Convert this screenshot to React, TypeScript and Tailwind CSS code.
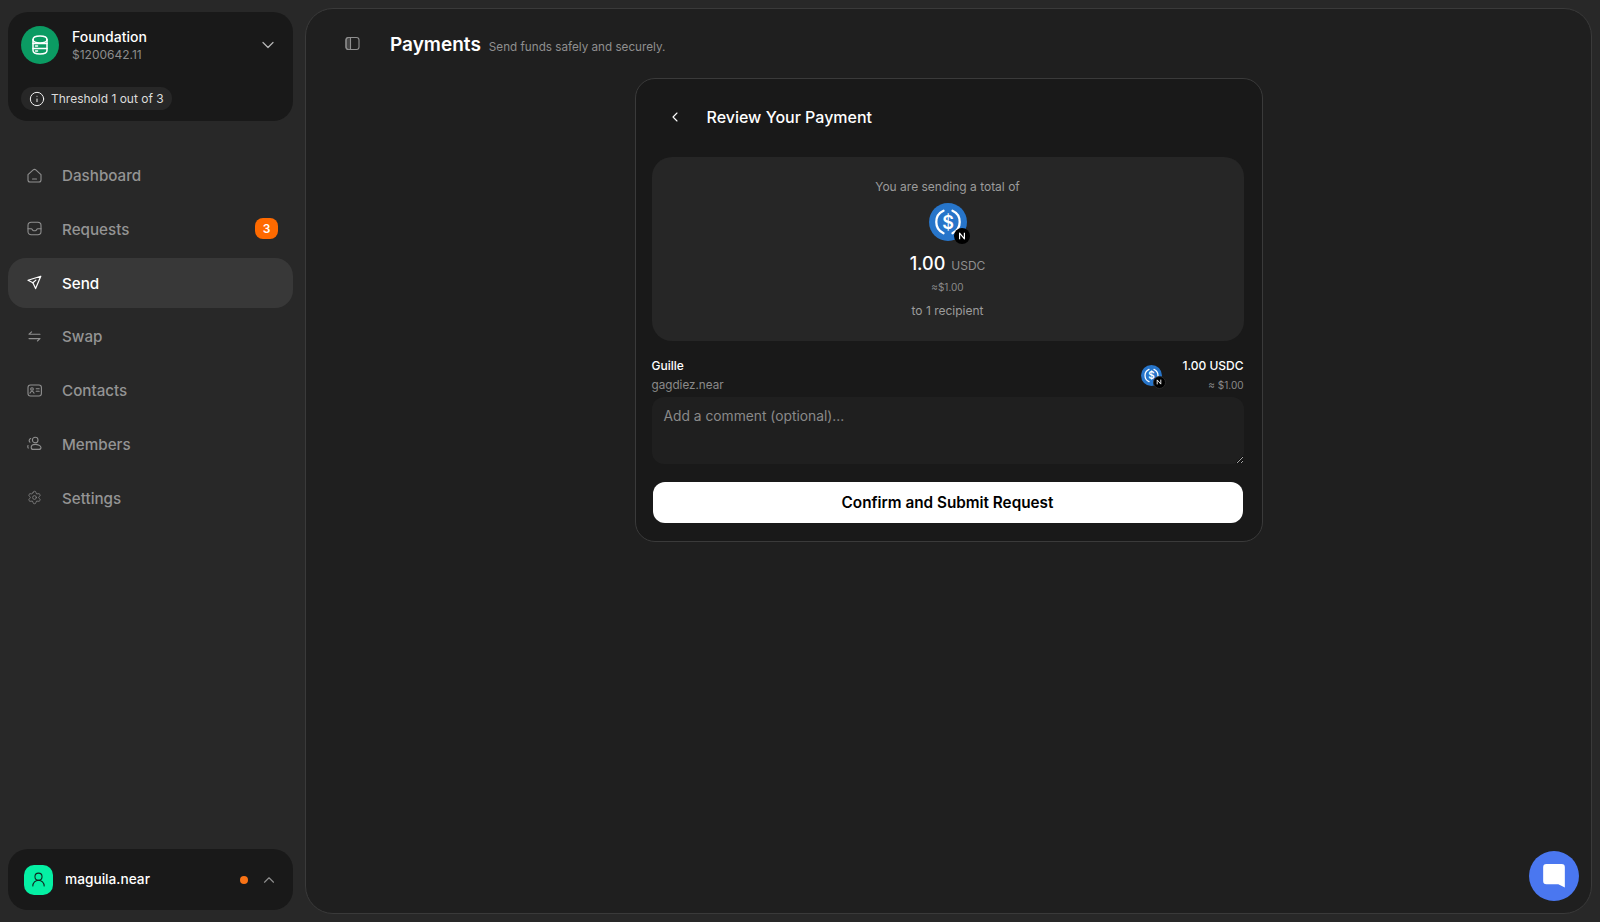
import React from 'react';
import { ChevronDown, ChevronLeft, ChevronUp, Info, Settings, UserRound } from 'lucide-react';

const font = { sans: "font-['Inter','Noto_Sans',sans-serif]" };

const VaultIcon = () => (
  <svg width="22" height="22" viewBox="0 0 22 22" fill="none" stroke="#fff" strokeWidth="1.5" strokeLinecap="round" strokeLinejoin="round">
    <path d="M4 5.500C4 3.300 7.100 2 11 2s7 1.300 7 3.500v11c0 2.200-3.100 3.500-7 3.500s-7-1.300-7-3.500Z" />
    <path d="M4 5.500C4 7.500 7.100 9 11 9s7-1.500 7-3.500" />
    <path d="M4 9.500h14M4 14.500h14" />
    <path d="M6.500 12h2M6.500 17h2" />
  </svg>
);

const HomeIcon = () => (
  <svg width="15" height="15" viewBox="0 0 15 15" fill="none" stroke="currentColor" strokeWidth="1.1" strokeLinecap="round" strokeLinejoin="round">
    <path d="M1 6.600 6.200 1.900a2 2 0 0 1 2.600 0L14 6.600V12a2 2 0 0 1-2 2H3a2 2 0 0 1-2-2Z" />
    <path d="M5.500 11h4" />
  </svg>
);

const InboxIcon = () => (
  <svg width="15" height="15" viewBox="0 0 15 15" fill="none" stroke="currentColor" strokeWidth="1.1" strokeLinecap="round" strokeLinejoin="round">
    <rect x="1" y="1.200" width="13" height="12.600" rx="3.200" />
    <path d="M1 7.800h3.200c.6 0 .9.4 1.200 1 .3.6.8 1 1.400 1h1.400c.6 0 1.100-.4 1.400-1 .3-.6.6-1 1.200-1H14" />
  </svg>
);

const PlaneIcon = () => (
  <svg width="15" height="15" viewBox="0 0 15 15" fill="none" stroke="currentColor" strokeWidth="1.200" strokeLinecap="round" strokeLinejoin="round">
    <path d="M13.800 1.200 1 5.200l4.900 2.600 2.700 5.800Z" />
    <path d="m5.900 7.800 3-2.700" />
  </svg>
);

const SwapIcon = () => (
  <svg width="15" height="15" viewBox="0 0 15 15" fill="none" stroke="currentColor" strokeWidth="1.100" strokeLinecap="round" strokeLinejoin="round">
    <path d="M2 5.200h11M2 5.200l2.600-2.400" />
    <path d="M13 9.600H2M13 9.600l-2.600 2.400" />
  </svg>
);

const ContactIcon = () => (
  <svg width="15" height="15" viewBox="0 0 15 15" fill="none" stroke="currentColor" strokeWidth="1.100" strokeLinecap="round" strokeLinejoin="round">
    <rect x="1" y="2" width="13.400" height="11" rx="2.400" />
    <circle cx="5" cy="6" r="1.300" />
    <path d="M3 10.200c.3-1.200 1-1.700 2-1.700s1.700.5 2 1.700" />
    <path d="M9.200 5.800h3M9.200 8.200h3" />
  </svg>
);

const MembersIcon = () => (
  <svg width="15" height="15" viewBox="0 0 15 15" fill="none" stroke="currentColor" strokeWidth="1.100" strokeLinecap="round" strokeLinejoin="round">
    <circle cx="8.200" cy="4" r="2.800" />
    <path d="M4.200 11.400c0-1.800 1.600-3 4-3s5.800 1.200 5.800 3c0 1.300-1 2-2.400 2H6.200c-1.200 0-2-.8-2-2Z" />
    <path d="M3.700 2.500a2.200 2.200 0 0 0-.8 3.700M1 9.500c-.3.800-.3 1.700.2 2.600" />
  </svg>
);

const PanelIcon = () => (
  <svg width="15" height="15" viewBox="0 0 15 15" fill="none" stroke="#8f8f8f" strokeWidth="1.100">
    <rect x="1" y="1.500" width="13" height="12" rx="2.500" />
    <path d="M5.500 1.500h-2A2.500 2.500 0 0 0 1 4v7a2.500 2.500 0 0 0 2.500 2.500h2Z" fill="#8f8f8f" fillOpacity="0.35" />
  </svg>
);

// usdc coin with the small near badge in the corner
const TokenIcon: React.FC<{ small?: boolean }> = ({ small }) => (
  <div className={small ? 'relative w-[21px] h-[21px]' : 'relative w-[38px] h-[38px]'}>
    <svg viewBox="0 0 38 38" className="w-full h-full">
      <circle cx="19" cy="19" r="19" fill="#2775ca" />
      <path d="M14.500 7.800a12.300 12.300 0 0 0 0 22.400M23.500 7.800a12.300 12.300 0 0 1 0 22.400" fill="none" stroke="#fff" strokeWidth="2.300" strokeLinecap="round" />
      <text x="19" y="25.500" textAnchor="middle" fontSize="18" fontWeight="600" fill="#fff" fontFamily="Inter, sans-serif">$</text>
    </svg>
    <div className={small
      ? 'absolute -right-[4px] -bottom-[3px] w-[13px] h-[13px] rounded-full bg-black border border-[#2a2a2a] flex items-center justify-center'
      : 'absolute -right-[3px] -bottom-[3px] w-[16px] h-[16px] rounded-full bg-black flex items-center justify-center'}>
      <svg viewBox="0 0 10 10" className={small ? 'w-[6px] h-[6px]' : 'w-[8px] h-[8px]'} fill="none" stroke="#fff" strokeWidth="1.500" strokeLinejoin="round">
        <path d="M2 9V1.500L8 8.500V1" />
      </svg>
    </div>
  </div>
);

const navItems = [
  { name: 'Dashboard', icon: <HomeIcon /> },
  { name: 'Requests', icon: <InboxIcon />, badge: 3 },
  { name: 'Send', icon: <PlaneIcon />, active: true },
  { name: 'Swap', icon: <SwapIcon /> },
  { name: 'Contacts', icon: <ContactIcon /> },
  { name: 'Members', icon: <MembersIcon /> },
  { name: 'Settings', icon: <Settings size={15} strokeWidth={1.200} /> },
];

const Sidebar = () => (
  <aside className="w-[305px] shrink-0 flex flex-col pl-2 pr-[12px] pt-3 pb-[12px]">
    <div className="h-[109px] rounded-[20px] bg-[#191919] pl-[13px] pr-[12px] pt-[14px]">
      <div className="flex items-center">
        <div className="w-[38px] h-[38px] rounded-full bg-[#0b9b63] flex items-center justify-center">
          <VaultIcon />
        </div>
        <div className="ml-[13px] flex-1">
          <div className="text-[14px] leading-[19px] font-medium text-white">Foundation</div>
          <div className="text-[12px] leading-[17px] text-[#8c8c8c]">$1200642.11</div>
        </div>
        <ChevronDown size={20} strokeWidth={1.500} className="text-[#b5b5b5] mr-[3px]" />
      </div>
      <div className="mt-[23px] inline-flex items-center h-[23px] rounded-full bg-[#272727] pl-[8px] pr-2 gap-[6px]">
        <Info size={16} strokeWidth={1.500} className="text-[#f0f0f0]" />
        <span className="text-[12px] text-[#dcdcdc]">Threshold 1 out of 3</span>
      </div>
    </div>
    <nav className="mt-[29px] flex flex-col gap-[3.75px]">
      {navItems.map((item) => (
        <div
          key={item.name}
          className={`h-[50px] rounded-[18px] flex items-center pl-[19px] pr-[15px] ${item.active ? 'bg-[#383838] text-white' : 'text-[#8f8f8f]'}`}
        >
          {item.icon}
          <span className={`ml-[20px] pt-[3px] flex-1 text-[15.200px] font-medium ${item.active ? 'text-white' : 'text-[#949494]'}`}>{item.name}</span>
          {item.badge && (
            <span className="w-[23px] h-[21px] rounded-[8px] bg-[#ff6a00] text-white text-[12px] font-semibold flex items-center justify-center">
              {item.badge}
            </span>
          )}
        </div>
      ))}
    </nav>
    <div className="mt-auto h-[61px] rounded-[20px] bg-[#191919] flex items-center pl-4 pr-[15px]">
      <div className="w-[29px] h-[30px] rounded-[10px] bg-[#05f0a4] flex items-center justify-center text-[#10251e]">
        <UserRound size={17} strokeWidth={1.500} />
      </div>
      <span className="ml-[12px] flex-1 text-[13.700px] font-medium text-white">maguila.near</span>
      <span className="w-2 h-2 rounded-full bg-[#f97316]" />
      <ChevronUp size={18} strokeWidth={1.500} className="ml-[12px] text-[#8f8f8f]" />
    </div>
  </aside>
);

const ReviewCard = () => (
  <div className="w-[628px] h-[464px] mx-auto rounded-[20px] border border-[#3a3a3a] bg-[#191919] pl-4 pr-[18px] pb-4">
    <div className="h-[78px] flex items-center pl-[15px] pb-[2px]">
      <ChevronLeft size={16} strokeWidth={1.600} className="text-white" />
      <h2 className="ml-[24px] text-[16px] font-medium text-white">Review Your Payment</h2>
    </div>
    <div className="h-[184px] rounded-[20px] bg-[#262626] flex flex-col items-center pt-[21px]">
      <div className="text-[12px] leading-[18px] text-[#9c9c9c]">You are sending a total of</div>
      <div className="mt-[7px]"><TokenIcon /></div>
      <div className="mt-[9px] flex items-baseline gap-[6px] leading-[28px]">
        <span className="text-[18px] font-medium text-white">1.00</span>
        <span className="text-[12px] text-[#8f8f8f]">USDC</span>
      </div>
      <div className="text-[10px] leading-[14px] text-[#8a8a8a]">≈$1.00</div>
      <div className="mt-[8px] text-[12px] leading-[18px] text-[#9c9c9c]">to 1 recipient</div>
    </div>
    <div className="h-[56px] flex items-center pt-[12px]">
      <div className="flex-1">
        <div className="text-[12px] leading-[19px] font-medium text-white">Guille</div>
        <div className="mt-px text-[11.700px] leading-[19px] text-[#8a8a8a]">gagdiez.near</div>
      </div>
      <div><TokenIcon small /></div>
      <div className="ml-[18px] w-[64px] text-right">
        <div className="text-[12px] leading-[19px] font-medium text-white">1.00 USDC</div>
        <div className="mt-px text-[10px] leading-[19px] text-[#8a8a8a]">≈ $1.00</div>
      </div>
    </div>
    <textarea
      placeholder="Add a comment (optional)..."
      className="block w-full h-[67px] rounded-xl bg-[#1f1f1f] px-3 pt-[9px] pb-2 text-[13.800px] leading-5 text-white placeholder:text-[#8a8a8a] outline-none"
    />
    <button className="mt-[18px] mx-px w-[590px] h-[41px] pt-px rounded-xl bg-white text-black text-[15.300px] font-semibold">
      Confirm and Submit Request
    </button>
  </div>
);

export default function App() {
  return (
    <div className={`h-screen flex bg-[#282828] overflow-hidden ${font.sans}`}>
      <Sidebar />
      <main className="relative flex-1 mt-2 mb-[8px] mr-[8px] rounded-[28px] border border-[#3a3a3a] bg-[#1f1f1f]">
        <header className="h-[69px] flex items-center pl-[39px]">
          <PanelIcon />
          <h1 className="ml-[30px] pt-[3px] text-[19px] font-semibold text-white">Payments</h1>
          <p className="ml-2 mt-[8px] text-[11.700px] text-[#8f8f8f]">Send funds safely and securely.</p>
        </header>
        <ReviewCard />
        <button className="absolute right-[12px] bottom-[12px] w-[50px] h-[50px] rounded-full bg-[#4a77f0] flex items-center justify-center">
          <svg width="26" height="26" viewBox="0 0 24 24" fill="#fff">
            <path d="M5 1h14a3 3 0 0 1 3 3v18.500l-6-3H5a3 3 0 0 1-3-3V4a3 3 0 0 1 3-3Z" />
          </svg>
        </button>
      </main>
    </div>
  );
}
